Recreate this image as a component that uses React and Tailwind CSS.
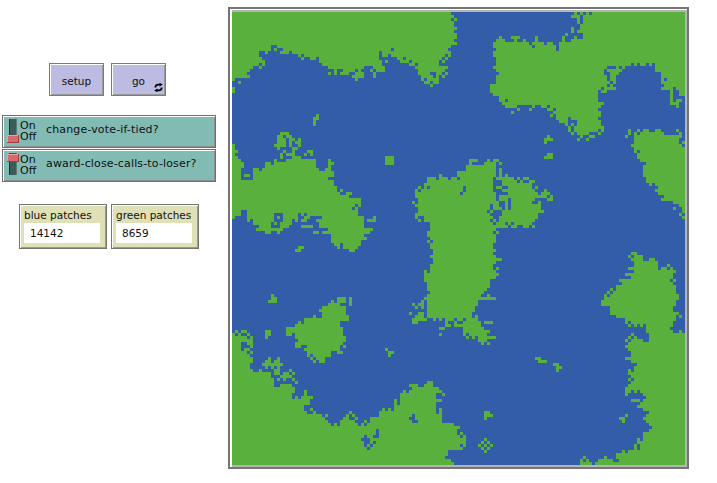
const ROWS = `0-72 114 116 118 120-150
0-73 113-115 117-150
0-72 74 115 117-150
0-73 115 117-150
0-73 116-150
0-74 113 116-150
0-73 113 115-150
0-74 111 117-150
0-74 89 93-95 101 110 114 117-150
0-73 88-90 94 97 101 110 113-150
0-74 87-98 100-103 105-106 109-150
0-12 15-72 87-99 101-107 109-150
0-12 14 17-52 54-71 88-107 109-150
0-8 11 16-18 20-48 50-72 87-150
0-8 22 24-48 50-51 53-70 72 87-150
0-9 23 26-27 29-48 55-56 58-69 71 88-150
0-10 29-49 51 56-58 60-68 70 88-150
0-8 10 30-49 59-60 62-68 88-132 134 136-137 139 141-150
0-6 9 32-43 47-50 61-71 87-124 128 130 141-150
0-5 34 37-40 42 46 48-50 62-70 88-123 125-129 141-150
0-4 32 34 36-38 41-43 47 62-65 68-69 71 89-123 126-128 143-150
0-5 40-43 47 63-66 68 70 88-124 126-127 143-150
0 41 63 65-68 88-124 126-127 143 145-150
2 64-65 67-68 88-125 127 143-150
66 86-124 126 144-150
0 86-122 124-127 143-146 148-150
0 86-121 123-124 146 149-150
87-121 146 149-150
89-121 146
89-90 92-121 146 148-149
90-123 146-148
91-94 100 103-104 106-122 148
95 99 105-106 108-121
93 107-122
28 106 108-122
27-28 108-111 113-121
27 109-111 115-122
27 111 113 115-122
112 114-123
112 114-121 123 132 135 137-138 141-142 148
16-18 113 115-118 122 132 134 136-143 149
15-16 18-19 105 116 119-120 131 134-149
15-17 19-20 22 104-106 115 118 134-148
15-17 19 21-22 104 134-148 150
0 14-17 19 22 133-149
0 15 20-21 134-150
0-1 17 20 25-26 134 136-150
0 16 18-20 24 26 105-106 135-150
0-1 16 20-22 51-53 104-106 135-150
0-2 14 18-27 32 51-53 79-81 85 87-88 136-150
0-3 11-12 14-27 32-33 51-53 79 84-87 89 138-150
0-3 11-27 32 78-87 137-150
0-2 7-8 10-28 31-32 78-87 89 137-150
0-2 7-33 75-87 89 137-150
0-2 4-5 7-33 69 75-87 89 91 137-150
0-2 7-31 65-67 69-71 73-74 76-86 88-93 95 97-98 138-150
0-33 65-86 90-94 96 99-100 138-150
0-33 64-86 90-99 139 141-150
0-34 62 64 66-76 78-86 88-89 92-99 101 142-150
0-34 36 61 63-76 78-86 90-100 104 141-150
0-35 38-39 61-75 77-87 92-101 103-105 142-150
0-38 61-87 89-104 106 144-150
0-42 62-87 89-91 93-100 105-106 143-150
0-42 60 62-88 91 93-99 102 147-150
0-40 42 61-85 87-88 91 93-102 149-150
0-39 41 62-85 87-89 91 93-102 147 150
0-2 5-41 62-84 86 90-103 150
0-2 5-13 17-21 23 25-41 61-85 90-101 149
0 5-13 15 17-21 24-25 30-43 47 61 64-86 89-101 150
5 7-13 17-19 21 23-24 28-43 45-47 62 64-85 87 89-100
7-12 14 16-19 29-43 66-86 88-90 92 94-99
9-12 16-18 23-26 29-43 66-91 93-94 97-98 100
8-16 32-46 66-87
11-12 15 27-28 30-45 65-86 88
33-43 65-87
33-44 66-87
33-42 65 67-87
34-35 37-42 66-86
22-23 35 37-41 66-86
21-22 39-40 67-87
67-86 133-134
66-87 132 134-136
67-89 133-136 139-140
67-87 134-141
66-86 134-141 145
66-86 88 132-141 143-144 146
64 66-87 134-147
64-88 131-146
64-87 133-146
64-85 129-145 147
65-85 130-146
65-85 128-147
65-84 126 128-147
66-83 125 127-147
13 65-82 85 124 126-148
13-14 35-37 39 64-87 124-148
12-14 33 35-37 39 63 65-81 123-147
32-35 39 60 62-63 65-81 123-147
30-37 61 63 65-80 126-146
29-37 65-80 126-146
30-37 59 62-63 65-79 126-148
27 30-38 61-63 65-79 81 128-147 149
24-38 60-64 67 69 71-73 75-76 78-81 131-147
22 24-35 60-61 71 74 77-82 84-86 131 133-146
21-35 71-72 74-82 132 134 136 138-146
18-36 69-70 77-83 138-145
1 3-4 11-12 18-36 77-85 138-146 149
0 2 5 11-12 18-19 21-36 69 77 79-84 133 139-150
0-4 6 11 21-37 78 80 82-87 132 134 139-150
0-6 22-37 82-84 131 133-136 139-150
0-2 5-6 21-36 83 85 132-150
0-2 6 21-22 25-35 37 131-150
0-2 4-5 24-35 51 132-150
0-4 6 25-32 35-36 52-53 133-150
0-5 25 27-32 52 133-150
0-6 12 15 26 28-30 101-102 131-150
0-6 11-12 14-15 27 29-30 102-104 133-150
0-5 10-16 107-108 135-150
0-5 11 13 15 108-109 134-150
0-6 9 14-15 19 108 132 134-150
0-12 14-15 17-18 20 132-150
0-12 16-19 133-150
0-13 15 17 20 132 134-150
0-13 21 65-66 133-150
0-13 16-19 59-61 64-66 132-150
0-20 60-68 131-150
0-20 24 57 59-69 131-132 134 136-150
0-19 24 56-67 70 131 137-150
0-19 21 23-26 56-67 138-150
0-25 54 56-69 133-135 137-150
0-25 54 56-67 136-150
0-23 54-67 135-150
0-23 26 50 52 54-67 69 137-150
0-24 27 39 49-67 69 84-85 139-150
0-29 31 38 40 49-59 61-69 84-86 131 138-150
0-30 37-38 41 46-58 61-69 84 129-130 137-150
0-31 36-40 44 46-59 62-69 130 138-150
0-32 34 36-41 43 45-73 139-150
0-75 140-150
0-47 49-74 139-150
0-47 49-74 76 137-150
0-43 45-46 49-75 77 137-150
0-42 46-77 84 135 137-150
0-43 46 48-77 83 85 135-150
0-43 45 47-75 77 82 84 86 134 136-150
0-44 46-76 83 85 134 136-150
0-71 84 130 132-150
0-71 128-150
0-70 117 124 128-150
0-72 116 118 122-126 129-150
0-73 116-119 121-150`.split("\n");

const pathD = ROWS.map((line, r) =>
  line.trim().split(/\s+/).map((run) => {
    const [a, b] = run.split("-").map(Number);
    const w = (b === undefined ? a : b) - a + 1;
    return `M${a} ${r}h${w}v1h-${w}z`;
  }).join("")
).join("");

function Forever() {
  return (
    <svg viewBox="0 0 10 10" className="absolute left-[42px] top-[19px] w-[9px] h-[9px]">
      <path d="M1.5 5 C1.5 2.8 2.8 1.8 4.6 1.8 H7" fill="none" stroke="#000" strokeWidth="2" />
      <path d="M6.2 -0.2 L9.8 1.8 L6.2 4 Z" fill="#000" />
      <path d="M8.5 5 C8.5 7.2 7.2 8.2 5.4 8.2 H3" fill="none" stroke="#000" strokeWidth="2" />
      <path d="M3.8 6 L0.2 8.2 L3.8 10.2 Z" fill="#000" />
    </svg>
  );
}

function Btn({ label, forever }) {
  return (
    <div className="relative w-[55px] h-[33px] pt-[5px] bg-[#bcbbe2] border border-[#7b7b7b] shadow-[inset_1px_1px_0_#fff,inset_-1px_-1px_0_#9a9a9a] flex items-center justify-center text-[10.5px] text-[#111]">
      <span>{label}</span>
      {forever && <Forever />}
    </div>
  );
}

function Switch({ label, on }) {
  return (
    <div className="w-[214px] h-[33px] bg-[#82bbb3] border border-[#6f6f6f] shadow-[inset_1px_1px_0_#fff,inset_-1px_-1px_0_#8f8f8f] flex items-center text-[#111]">
      <div className="relative w-[12px] h-full ml-[4px] shrink-0">
        <div className="absolute left-[2px] top-[3px] w-[8px] h-[22px] bg-[#3d5b58] border-l border-[#24332f] border-r border-r-[#5d7a75]" />
        <div className={`absolute left-0 w-[12px] h-[8px] bg-[#d9696c] border-b border-r border-[#9a3f42] shadow-[inset_1px_1px_0_#eda0a0] ${on ? "top-[4px]" : "top-[19px]"}`} />
      </div>
      <div className="ml-[1px] -mt-[1px] flex flex-col text-[11px] leading-[11px] w-[19px] shrink-0">
        <span>On</span>
        <span>Off</span>
      </div>
      <span className="ml-[7px] text-[11px] tracking-[0.15px] -mt-[3px]">{label}</span>
    </div>
  );
}

function Monitor({ label, value }) {
  return (
    <div className="w-[88px] h-[45px] bg-[#dfe0b6] border border-[#757575] shadow-[inset_1px_1px_0_#fff,inset_-1px_-1px_0_#999] pl-[4px] pt-[3px] flex flex-col text-[#111]">
      <span className="text-[10.5px] leading-[15px] h-[15px] whitespace-nowrap">{label}</span>
      <div className="w-[76px] h-[20px] bg-white pl-[6px] text-[10.5px] leading-[20px]">{value}</div>
    </div>
  );
}

export default function App() {
  return (
    <div className="flex w-[717px] h-[483px] bg-white overflow-hidden font-['DejaVu_Sans',sans-serif]">
      <div className="w-[228px] shrink-0 flex flex-col pt-[63px]">
        <div className="flex gap-[7px] ml-[49px]">
          <Btn label="setup" />
          <Btn label="go" forever />
        </div>
        <div className="flex flex-col gap-[1px] ml-[2px] mt-[19px]">
          <Switch label="change-vote-if-tied?" />
          <Switch label="award-close-calls-to-loser?" on />
        </div>
        <div className="flex gap-[4px] ml-[19px] mt-[22px]">
          <Monitor label="blue patches" value="14142" />
          <Monitor label="green patches" value="8659" />
        </div>
      </div>
      <div className="mt-[7px] w-[461px] h-[462px] border-2 border-[#757575] bg-white pt-[1px] pl-[2px]">
        <div className="w-[455px] h-[457px] border-t-2 border-r-2 border-b-2 border-[#b4b4b4]">
          <svg viewBox="0 0 151 151" width="453" height="453" shapeRendering="crispEdges" className="block bg-[#345da9]">
            <path d={pathD} fill="#59b03c" />
          </svg>
        </div>
      </div>
    </div>
  );
}
